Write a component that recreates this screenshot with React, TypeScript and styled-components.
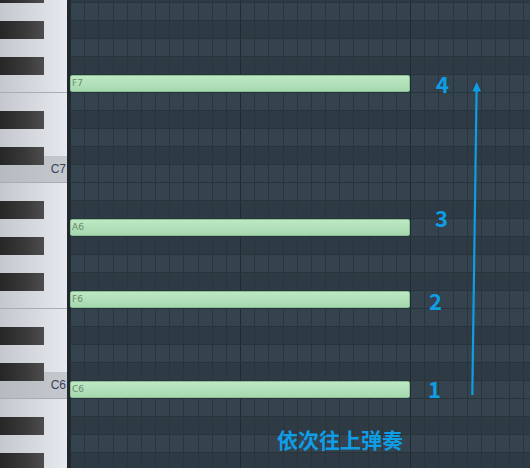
import React from "react";
import styled, { createGlobalStyle } from "styled-components";

const NAMES = ["C", "C#", "D", "D#", "E", "F", "F#", "G", "G#", "A", "A#", "B"];
const TOP_NOTE = 94; // A#7
const LOW_NOTE = 68; // G#5
const ROW = 18;
const ROW_OFFSET = -15; // A#7 row is partly above the window
const KEY_HEIGHT: Record<string, number> = { C: 27, D: 36, E: 27, F: 27, G: 36, A: 36, B: 27 };

const nameOf = (m: number) => NAMES[m % 12] + Math.floor(m / 12);
const isBlack = (m: number) => NAMES[m % 12].includes("#");
const rowTop = (m: number) => ROW_OFFSET + (TOP_NOTE - m) * ROW;

const midis: number[] = [];
for (let m = TOP_NOTE; m >= LOW_NOTE; m--) midis.push(m);

const whiteKeys = midis.filter((m) => !isBlack(m));
const blackKeys = midis.filter(isBlack);

const notes = [89, 81, 77, 72]; // F7, A6, F6, C6

const steps = [
  { label: "4", x: 436, y: 72 },
  { label: "3", x: 435, y: 206 },
  { label: "2", x: 429, y: 289 },
  { label: "1", x: 428, y: 377 },
];

const GlobalStyle = createGlobalStyle`
  html, body {
    margin: 0;
    padding: 0;
    background: #2f3c46;
  }
`;

export default function App() {
  return (
    <>
      <GlobalStyle />
      <Window>
        <Piano>
          <WhiteStack>
            {whiteKeys.map((m) => {
              const n = nameOf(m);
              const letter = n[0];
              return (
                <WhiteKey
                  key={n}
                  $h={KEY_HEIGHT[letter]}
                  $c={letter === "C"}
                  $edge={letter === "F" || letter === "C"}
                >
                  {letter === "C" && <KeyLabel>{n}</KeyLabel>}
                </WhiteKey>
              );
            })}
          </WhiteStack>
          {blackKeys.map((m) => (
            <BlackKey key={nameOf(m)} style={{ top: rowTop(m) }} />
          ))}
        </Piano>
        <Grid>
          <RowStack>
            {midis.map((m) => (
              <GridRow key={nameOf(m)} $dark={isBlack(m)} />
            ))}
          </RowStack>
          {notes.map((m) => (
            <Note key={m} style={{ top: rowTop(m) }}>
              <NoteLabel>{nameOf(m)}</NoteLabel>
            </Note>
          ))}
        </Grid>
        <Overlay>
          {steps.map((s) => (
            <Step key={s.label} $x={s.x} $y={s.y}>
              {s.label}
            </Step>
          ))}
          <Arrow width="530" height="468" viewBox="0 0 530 468">
            <line x1="472.3" y1="395" x2="476.6" y2="89" stroke="#0f9de6" strokeWidth="2.2" />
            <polygon points="472.4,91.5 476.7,82 481,91.5" fill="#0f9de6" />
          </Arrow>
          <Caption>依次往上弹奏</Caption>
        </Overlay>
      </Window>
    </>
  );
}

const Window = styled.div`
  position: relative;
  display: flex;
  width: 530px;
  height: 468px;
  overflow: hidden;
  background: #2f3c46;
`;

const Piano = styled.div`
  position: relative;
  flex: 0 0 67px;
  border-right: 3px solid #20282e;
  overflow: hidden;
  background: linear-gradient(to right, #c4c8ce, #e6e9ee);
`;

const WhiteStack = styled.div`
  display: flex;
  flex-direction: column;
  margin-top: -6px;
`;

const WhiteKey = styled.div<{ $h: number; $c: boolean; $edge: boolean }>`
  box-sizing: border-box;
  flex: 0 0 ${(p) => p.$h}px;
  display: flex;
  align-items: center;
  justify-content: flex-end;
  padding-right: 1px;
  border-bottom: 1px solid ${(p) => (p.$edge ? "#a9adb3" : "transparent")};
  background: ${(p) =>
    p.$c ? "linear-gradient(to right, #b7bbc1, #c5c9ce)" : "transparent"};
`;

const KeyLabel = styled.span`
  font-family: "Liberation Sans", Arial, sans-serif;
  font-size: 12px;
  color: #34445a;
  line-height: 1;
`;

const BlackKey = styled.div`
  position: absolute;
  left: 0;
  width: 44px;
  height: 18px;
  background: linear-gradient(to right, #262626, #3a3a3a 60%, #4d4d4d);
`;

const Grid = styled.div`
  position: relative;
  flex: 1;
  overflow: hidden;
`;

const RowStack = styled.div`
  display: flex;
  flex-direction: column;
  margin-top: ${ROW_OFFSET}px;
`;

const GridRow = styled.div<{ $dark: boolean }>`
  box-sizing: border-box;
  height: ${ROW}px;
  border-bottom: 1px solid #28343c;
  background-color: ${(p) => (p.$dark ? "#2e3b44" : "#34434d")};
  background-image: repeating-linear-gradient(
      to right,
      #1f2a31 0 1px,
      transparent 1px 170px
    ),
    repeating-linear-gradient(
      to right,
      #29353d 0 1px,
      transparent 1px 14.1667px
    );
`;

const Note = styled.div`
  position: absolute;
  left: 0;
  width: 340px;
  height: 17px;
  box-sizing: border-box;
  border: 1px solid #8cbd95;
  border-radius: 2px;
  background: linear-gradient(to bottom, #bde8c4, #a6d9af);
  display: flex;
  align-items: center;
  padding-left: 1px;
`;

const NoteLabel = styled.span`
  font-family: "DejaVu Sans", sans-serif;
  font-size: 9px;
  color: #68896d;
  line-height: 1;
`;

const Overlay = styled.div`
  position: absolute;
  inset: 0;
  pointer-events: none;
`;

const Step = styled.div<{ $x: number; $y: number }>`
  position: absolute;
  left: ${(p) => p.$x}px;
  top: ${(p) => p.$y}px;
  font-family: "Noto Sans CJK SC", "Noto Sans", sans-serif;
  font-weight: 700;
  font-size: 22px;
  line-height: 1;
  color: #0f9de6;
`;

const Arrow = styled.svg`
  position: absolute;
  left: 0;
  top: 0;
`;

const Caption = styled.div`
  position: absolute;
  left: 277px;
  top: 429px;
  font-family: "Noto Sans CJK SC", sans-serif;
  font-weight: 700;
  font-size: 21px;
  line-height: 1;
  color: #0f9de6;
`;
